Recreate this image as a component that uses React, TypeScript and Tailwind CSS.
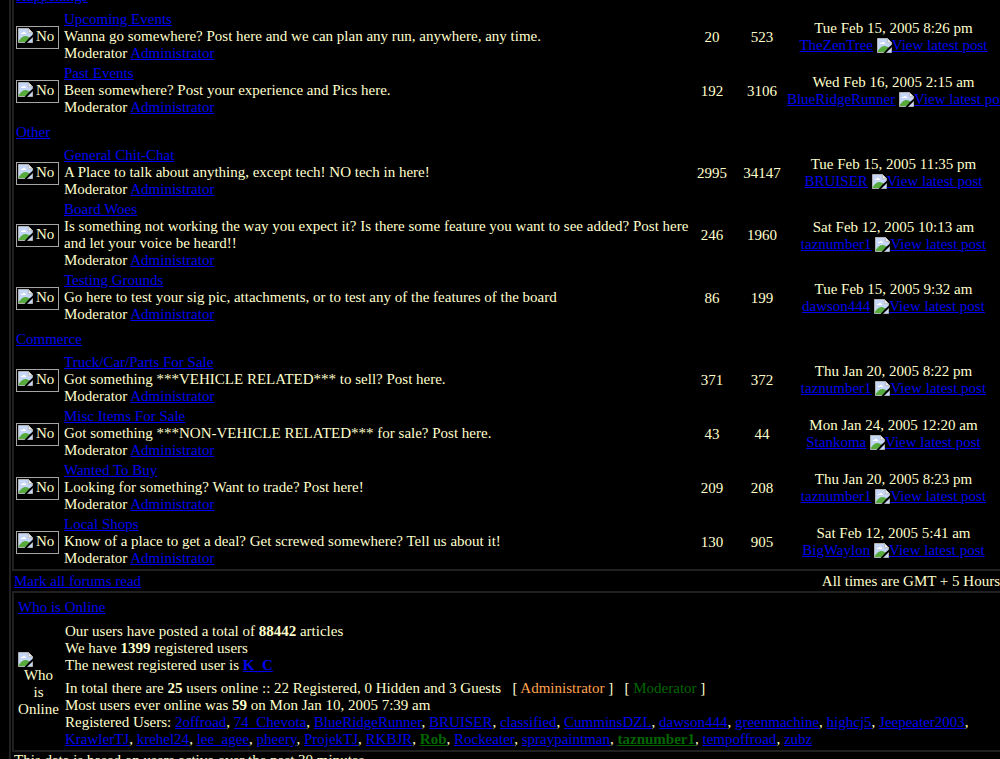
import type { ReactNode } from "react";
import clsx from "clsx";

type Forum = {
  name: string;
  description: string;
  topics: number;
  posts: number;
  date: string;
  user: string;
};

const categories: { name: string; forums: Forum[] }[] = [
  {
    name: "Happenings",
    forums: [
      {
        name: "Upcoming Events",
        description:
          "Wanna go somewhere? Post here and we can plan any run, anywhere, any time.",
        topics: 20,
        posts: 523,
        date: "Tue Feb 15, 2005 8:26 pm",
        user: "TheZenTree",
      },
      {
        name: "Past Events",
        description: "Been somewhere? Post your experience and Pics here.",
        topics: 192,
        posts: 3106,
        date: "Wed Feb 16, 2005 2:15 am",
        user: "BlueRidgeRunner",
      },
    ],
  },
  {
    name: "Other",
    forums: [
      {
        name: "General Chit-Chat",
        description:
          "A Place to talk about anything, except tech! NO tech in here!",
        topics: 2995,
        posts: 34147,
        date: "Tue Feb 15, 2005 11:35 pm",
        user: "BRUISER",
      },
      {
        name: "Board Woes",
        description:
          "Is something not working the way you expect it? Is there some feature you want to see added? Post here and let your voice be heard!!",
        topics: 246,
        posts: 1960,
        date: "Sat Feb 12, 2005 10:13 am",
        user: "taznumber1",
      },
      {
        name: "Testing Grounds",
        description:
          "Go here to test your sig pic, attachments, or to test any of the features of the board",
        topics: 86,
        posts: 199,
        date: "Tue Feb 15, 2005 9:32 am",
        user: "dawson444",
      },
    ],
  },
  {
    name: "Commerce",
    forums: [
      {
        name: "Truck/Car/Parts For Sale",
        description: "Got something ***VEHICLE RELATED*** to sell? Post here.",
        topics: 371,
        posts: 372,
        date: "Thu Jan 20, 2005 8:22 pm",
        user: "taznumber1",
      },
      {
        name: "Misc Items For Sale",
        description:
          "Got something ***NON-VEHICLE RELATED*** for sale? Post here.",
        topics: 43,
        posts: 44,
        date: "Mon Jan 24, 2005 12:20 am",
        user: "Stankoma",
      },
      {
        name: "Wanted To Buy",
        description: "Looking for something? Want to trade? Post here!",
        topics: 209,
        posts: 208,
        date: "Thu Jan 20, 2005 8:23 pm",
        user: "taznumber1",
      },
      {
        name: "Local Shops",
        description:
          "Know of a place to get a deal? Get screwed somewhere? Tell us about it!",
        topics: 130,
        posts: 905,
        date: "Sat Feb 12, 2005 5:41 am",
        user: "BigWaylon",
      },
    ],
  },
];

const onlineUsers = [
  "2offroad",
  "74_Chevota",
  "BlueRidgeRunner",
  "BRUISER",
  "classified",
  "CumminsDZL",
  "dawson444",
  "greenmachine",
  "highcj5",
  "Jeepeater2003",
  "KrawlerTJ",
  "krehel24",
  "lee_agee",
  "pheery",
  "ProjekTJ",
  "RKBJR",
  "Rob",
  "Rockeater",
  "spraypaintman",
  "taznumber1",
  "tempoffroad",
  "zubz",
];

const moderators = ["Rob", "taznumber1"];

function A({ children, className }: { children: ReactNode; className?: string }) {
  return (
    <a href="#" className={clsx("underline", className ?? "text-[#0000ee]")}>
      {children}
    </a>
  );
}

function BrokenImage({ className }: { className?: string }) {
  return (
    <svg
      viewBox="0 0 16 16"
      aria-hidden="true"
      className={clsx("size-[15px] shrink-0", className)}
    >
      <path d="M0.5 0.5H11L15.5 5V15.5H0.5Z" fill="#c6d6f6" stroke="#b8b8b8" />
      <path d="M11 0.5V5H15.5Z" fill="#f4f4f4" stroke="#b8b8b8" />
      <path d="M3 6.5C3 5 4.5 5 5 5.2C5.5 3.6 7.6 3.8 7.8 5.2C9 5.2 9 6.5 8.4 6.5Z" fill="#fff" />
      <path d="M1 15V13.5C3 10.5 5.5 8.5 8 8.5C10 8.5 12 9.5 13 11L9 15Z" fill="#56ab3c" />
      <path d="M16 7V9.5L9.5 16H7L12 10.5Z" fill="#000" />
    </svg>
  );
}

function ForumRow({ forum }: { forum: Forum }) {
  return (
    <tr>
      <td className="pl-0.5">
        <div
          role="img"
          aria-label="No new posts"
          className="flex h-[23px] w-[43px] gap-[3px] border border-[#a5a5a5] p-px leading-4"
        >
          <BrokenImage />
          No
        </div>
      </td>
      <td className="pt-px pb-0.5">
        <A>{forum.name}</A>
        <br />
        {forum.description}
        <br />
        Moderator <A>Administrator</A>
      </td>
      <td className="text-center">{forum.topics}</td>
      <td className="pl-1.5 text-center">{forum.posts}</td>
      <td className="text-center whitespace-nowrap">
        {forum.date}
        <br />
        <A>{forum.user}</A>{" "}
        <A>
          <BrokenImage className="inline-block align-text-bottom" />
          View latest post
        </A>
      </td>
    </tr>
  );
}

function ForumTable() {
  return (
    <div className="border-2 border-[#202020]">
      <table className="w-full table-fixed">
        <colgroup>
          <col className="w-[50px]" />
          <col />
          <col className="w-[38px]" />
          <col className="w-[56px]" />
          <col className="w-[213px]" />
        </colgroup>
        {categories.map((category) => (
          <tbody key={category.name}>
            <tr className="h-7">
              <td colSpan={5} className="pl-0.5">
                <A>{category.name}</A>
              </td>
            </tr>
            {category.forums.map((forum) => (
              <ForumRow key={forum.name} forum={forum} />
            ))}
          </tbody>
        ))}
      </table>
    </div>
  );
}

function WhoIsOnline() {
  return (
    <section className="border-2 border-[#202020] px-1 pb-0.5">
      <h2 className="flex h-7 items-center">
        <A>Who is Online</A>
      </h2>
      <div className="flex items-center gap-1.5">
        <div className="w-[41px] shrink-0 text-center">
          <BrokenImage className="block" />
          Who
          <br />
          is
          <br />
          Online
        </div>
        <div className="grow pt-0.5">
          <p>
            Our users have posted a total of <b>88442</b> articles
            <br />
            We have <b>1399</b> registered users
            <br />
            The newest registered user is{" "}
            <b>
              <A>K_C</A>
            </b>
          </p>
          <p className="mt-1.5">
            In total there are <b>25</b> users online :: 22 Registered, 0 Hidden
            and 3 Guests &nbsp; [ <span className="text-[#ffa34f]">Administrator</span> ]
            &nbsp; [ <span className="text-[#006600]">Moderator</span> ]
            <br />
            Most users ever online was <b>59</b> on Mon Jan 10, 2005 7:39 am
            <br />
            Registered Users:{" "}
            {onlineUsers.map((user, i) => (
              <span key={user}>
                {i > 0 && ", "}
                {moderators.includes(user) ? (
                  <A className="font-bold text-[#006600]">{user}</A>
                ) : (
                  <A>{user}</A>
                )}
              </span>
            ))}
          </p>
        </div>
      </div>
    </section>
  );
}

export default function App() {
  return (
    <div className="h-screen overflow-hidden bg-black font-['Liberation_Serif',serif] text-[15px] leading-[17px] text-[#ffffcc]">
      <main className="-mt-[22px] -mr-1 ml-[9px] border-2 border-[#202020] pl-px">
        <ForumTable />
        <div className="flex h-5 items-center justify-between pr-0.5 pl-0.5">
          <A>Mark all forums read</A>
          <span>All times are GMT + 5 Hours</span>
        </div>
        <WhoIsOnline />
        <p className="pl-0.5">
          This data is based on users active over the past 30 minutes
        </p>
      </main>
    </div>
  );
}
